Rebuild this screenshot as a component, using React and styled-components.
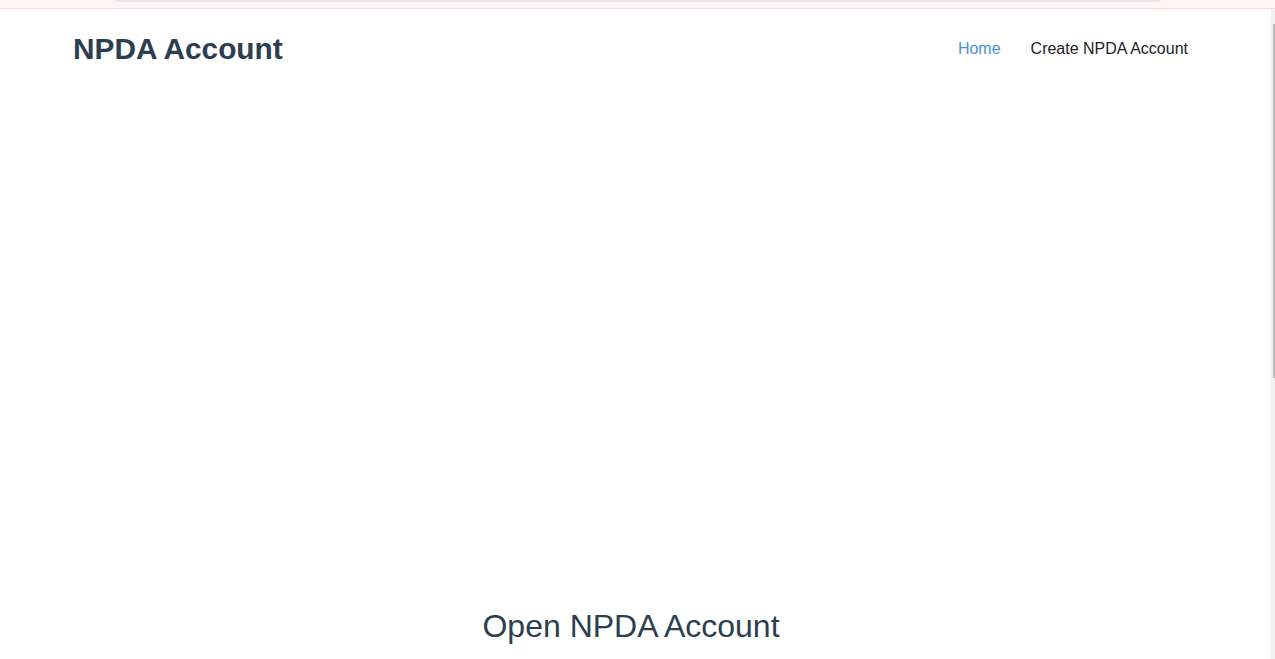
import React from "react";
import styled, { createGlobalStyle } from "styled-components";

const Global = createGlobalStyle`
  html, body { margin: 0; padding: 0; height: 100%; overflow: hidden; }
  body { font-family: "Liberation Sans", Arial, sans-serif; background: #fff; }
  #root { height: 100%; }
`;

const Page = styled.div`
  display: flex;
  flex-direction: column;
  height: 659px;
`;

const TopStrip = styled.div`
  flex: 0 0 8px;
  background: #fff5f4;
  border-bottom: 1px solid #f9d9e3;
  display: flex;
  justify-content: flex-start;
  padding-left: 115px;
`;

const StripBar = styled.div`
  width: 1045px;
  height: 2px;
  background: #efe2e6;
  border-radius: 0 0 4px 4px;
`;

const Body = styled.div`
  flex: 1;
  display: flex;
  min-height: 0;
`;

const Scroller = styled.div`
  flex: 1;
  overflow: hidden;
`;

const ScrollTrack = styled.div`
  flex: 0 0 4px;
  background: #f0f0f0;
  display: flex;
  justify-content: flex-end;
  padding-top: 15px;
`;

const ScrollThumb = styled.div`
  width: 2px;
  height: 354px;
  background: #c1c1c1;
`;

const Header = styled.header`
  height: 80px;
  display: flex;
  align-items: center;
  justify-content: space-between;
  padding: 0 83px 0 73px;
`;

const Brand = styled.h1`
  margin: 0;
  font-size: 29.8px;
  font-weight: 700;
  color: #2c3e50;
  line-height: 1;
`;

const Nav = styled.nav`
  display: flex;
  gap: 30px;
`;

const NavLink = styled.a`
  font-size: 16px;
  color: ${(p) => (p.$active ? "#4a90d9" : "#222")};
  text-decoration: none;
`;

const Hero = styled.section`
  height: 518px;
`;

const Section = styled.section`
  display: flex;
  flex-direction: column;
  align-items: center;
`;

const Title = styled.h2`
  margin: 0;
  font-size: 32px;
  font-weight: 400;
  color: #2c3e50;
  line-height: 1.2;
  transform: translateX(-4.5px);
`;

export default function App() {
  return (
    <Page>
      <Global />
      <TopStrip>
        <StripBar />
      </TopStrip>
      <Body>
        <Scroller>
          <Header>
            <Brand>NPDA Account</Brand>
            <Nav>
              <NavLink $active href="#">Home</NavLink>
              <NavLink href="#">Create NPDA Account</NavLink>
            </Nav>
          </Header>
          <Hero />
          <Section>
            <Title>Open NPDA Account</Title>
          </Section>
        </Scroller>
        <ScrollTrack>
          <ScrollThumb />
        </ScrollTrack>
      </Body>
    </Page>
  );
}
